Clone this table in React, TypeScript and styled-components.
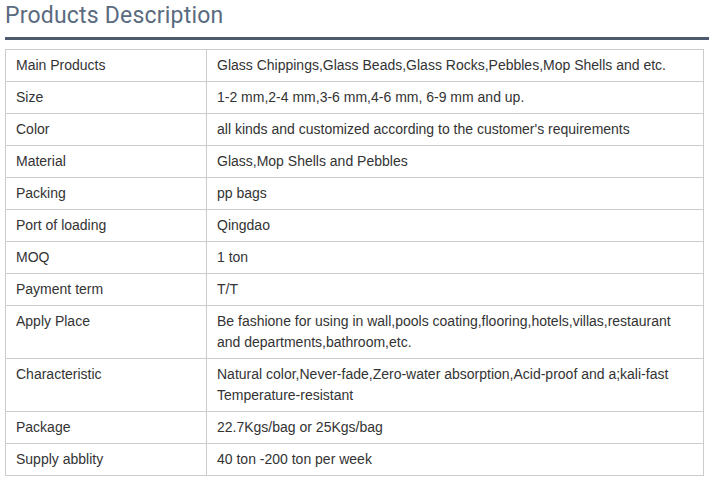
import React from "react";
import styled, { createGlobalStyle } from "styled-components";

const GlobalStyle = createGlobalStyle`
  html, body { margin: 0; padding: 0; background: #ffffff; }
  body { font-family: "Liberation Sans", Arial, sans-serif; }
`;

const Page = styled.div`
  padding: 0 0 0 5px;
`;

const TitleBar = styled.div`
  border-bottom: 3px solid #4f5b6d;
  height: 40px;
  box-sizing: border-box;
  display: flex;
  align-items: flex-start;
  padding-top: 1px;
`;

const Title = styled.h2`
  margin: 0;
  font-family: Roboto, "Liberation Sans", sans-serif;
  font-weight: 400;
  font-size: 23px;
  letter-spacing: 0.2px;
  line-height: 30px;
  color: #5a6b80;
`;

const Table = styled.table`
  margin-top: 9px;
  width: 699px;
  border-collapse: collapse;
  font-size: 14px;
  line-height: 21px;
  color: #333333;
`;

const Row = styled.tr`
  height: 32px;
`;

const Cell = styled.td<{ $label?: boolean }>`
  border: 1px solid #cccccc;
  padding: 5px 10px 5px 10px;
  vertical-align: top;
  text-align: left;
  width: ${(p) => (p.$label ? "180px" : "auto")};
`;

const rows: [string, string][] = [
  ["Main Products", "Glass Chippings,Glass Beads,Glass Rocks,Pebbles,Mop Shells and etc."],
  ["Size", "1-2 mm,2-4 mm,3-6 mm,4-6 mm, 6-9 mm and up."],
  ["Color", "all kinds and customized according to the customer's requirements"],
  ["Material", "Glass,Mop Shells and Pebbles"],
  ["Packing", "pp bags"],
  ["Port of loading", "Qingdao"],
  ["MOQ", "1 ton"],
  ["Payment term", "T/T"],
  ["Apply Place", "Be fashione for using in wall,pools coating,flooring,hotels,villas,restaurant and departments,bathroom,etc."],
  ["Characteristic", "Natural color,Never-fade,Zero-water absorption,Acid-proof and a;kali-fast Temperature-resistant"],
  ["Package", "22.7Kgs/bag or 25Kgs/bag"],
  ["Supply abblity", "40 ton -200 ton per week"],
];

export default function App() {
  return (
    <Page>
      <GlobalStyle />
      <TitleBar>
        <Title>Products Description</Title>
      </TitleBar>
      <Table>
        <tbody>
          {rows.map(([k, v]) => (
            <Row key={k}>
              <Cell $label>{k}</Cell>
              <Cell>{v}</Cell>
            </Row>
          ))}
        </tbody>
      </Table>
    </Page>
  );
}
